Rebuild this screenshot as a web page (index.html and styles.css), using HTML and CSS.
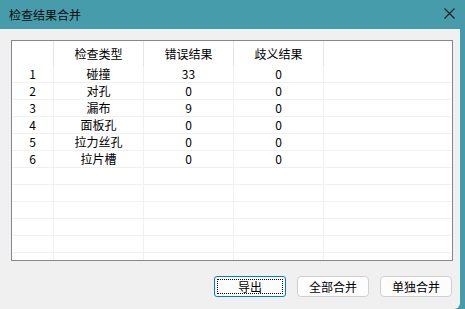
FILE: index.html
```html
<!DOCTYPE html>
<html lang="zh-CN">
<head>
    <meta charset="UTF-8">
    <title>检查结果合并</title>
    <link rel="stylesheet" href="styles.css">
</head>
<body>
    <div class="dialog">
        <div class="titlebar">
            <span class="title">检查结果合并</span>
            <svg class="close" width="11" height="11" viewBox="0 0 11 11">
                <path d="M0.5 0.5 L10.5 10.5 M10.5 0.5 L0.5 10.5" stroke="#1b1b1b" stroke-width="1.1" fill="none"/>
            </svg>
        </div>
        <div class="client">
            <div class="grid">
                <table class="table">
                    <tr class="head">
                        <th class="rowhead"></th>
                        <th>检查类型</th>
                        <th>错误结果</th>
                        <th>歧义结果</th>
                        <th class="fill"></th>
                    </tr>
                    <tr><td class="rowhead">1</td><td>碰撞</td><td>33</td><td>0</td><td class="fill"></td></tr>
                    <tr><td class="rowhead">2</td><td>对孔</td><td>0</td><td>0</td><td class="fill"></td></tr>
                    <tr><td class="rowhead">3</td><td>漏布</td><td>9</td><td>0</td><td class="fill"></td></tr>
                    <tr><td class="rowhead">4</td><td>面板孔</td><td>0</td><td>0</td><td class="fill"></td></tr>
                    <tr><td class="rowhead">5</td><td>拉力丝孔</td><td>0</td><td>0</td><td class="fill"></td></tr>
                    <tr><td class="rowhead">6</td><td>拉片槽</td><td>0</td><td>0</td><td class="fill"></td></tr>
                    <tr><td class="rowhead"></td><td></td><td></td><td></td><td class="fill"></td></tr>
                    <tr><td class="rowhead"></td><td></td><td></td><td></td><td class="fill"></td></tr>
                    <tr><td class="rowhead"></td><td></td><td></td><td></td><td class="fill"></td></tr>
                    <tr><td class="rowhead"></td><td></td><td></td><td></td><td class="fill"></td></tr>
                    <tr><td class="rowhead"></td><td></td><td></td><td></td><td class="fill"></td></tr>
                    <tr><td class="rowhead"></td><td></td><td></td><td></td><td class="fill"></td></tr>
                </table>
            </div>
            <div class="actions">
                <button class="btn btn-default">导出</button>
                <button class="btn">全部合并</button>
                <button class="btn">单独合并</button>
            </div>
        </div>
    </div>
</body>
</html>
```

FILE: styles.css
```css
html, body {
    margin: 0;
    padding: 0;
}

body {
    width: 465px;
    height: 309px;
    overflow: hidden;
    background-color: #469cab;
    font-family: "Noto Sans CJK SC", "Noto Sans", sans-serif;
    font-size: 12px;
    color: #000;
}

.titlebar {
    height: 29px;
    display: flex;
    align-items: center;
    justify-content: space-between;
    padding: 0 10px 0 9px;
    box-sizing: border-box;
}

.title {
    font-size: 12px;
    line-height: 14px;
    color: #0a0a0a;
}

.close {
    margin-top: -2px;
}

.client {
    width: 460px;
    height: 280px;
    box-sizing: border-box;
    padding: 11px 7px 0 11px;
    background-color: #f0f0f0;
    border-bottom-right-radius: 6px;
}

.grid {
    height: 221px;
    box-sizing: border-box;
    border: 1px solid #828790;
    background-color: #fff;
    overflow: hidden;
}

.table {
    width: 100%;
    border-collapse: collapse;
    table-layout: fixed;
}

th, td {
    padding: 0;
    text-align: center;
    font-weight: normal;
    white-space: nowrap;
    border-right: 1px solid #f0f0f0;
    border-bottom: 1px solid #f0f0f0;
    width: 89px;
    height: 16px;
    line-height: 16px;
}

.head th {
    height: 25px;
    line-height: 25px;
    border-bottom: none;
    border-right-color: #e5e5e5;
}

.rowhead {
    width: 41px;
}

.fill {
    width: auto;
    border-right: none;
}

.head .fill {
    border-right: none;
}

.actions {
    display: flex;
    justify-content: flex-end;
    gap: 11px;
    margin-top: 15px;
    padding-right: 1px;
}

.btn {
    width: 72px;
    height: 21px;
    padding: 0;
    font-family: "Noto Sans CJK SC", sans-serif;
    font-size: 12px;
    color: #000;
    background-color: #fdfdfd;
    border: 1px solid #d0d0d0;
    border-radius: 4px;
}

.btn-default {
    border-color: #0078d7;
    border-radius: 3px;
    outline: 1px dotted #000;
    outline-offset: -4px;
}
```
